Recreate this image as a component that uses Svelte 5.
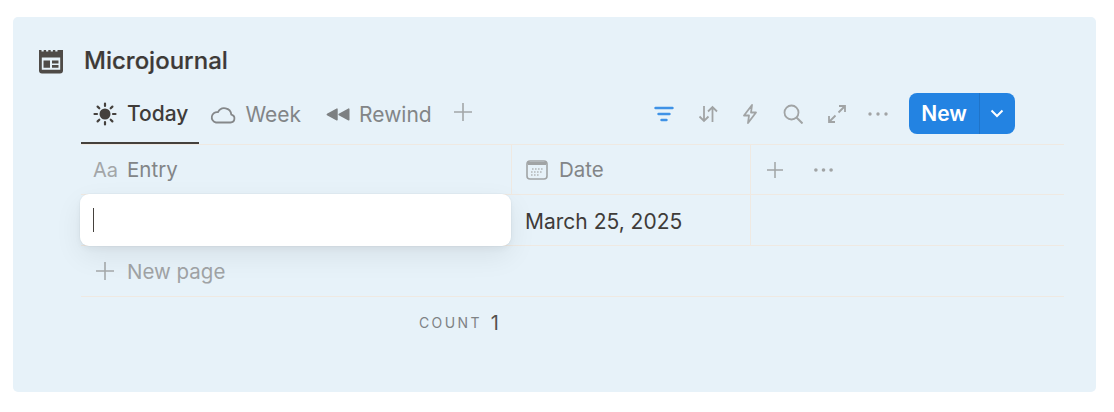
<script>
  const tabs = [
    { name: 'Today', icon: 'sun', active: true },
    { name: 'Week', icon: 'cloud' },
    { name: 'Rewind', icon: 'rewind' }
  ]
</script>

<div class="page">
  <div class="card">
    <div class="title">
      <svg class="title-icon" viewBox="0 0 26 25" width="26" height="25">
        <path fill="#4f4b47" fill-rule="evenodd" d="M1 1h2.500v1.500h2.200V1h2.400v1.500h2.200V1h2.400v1.500h2.200V1h2.400v1.500h2.200V1H25v20.500a3 3 0 0 1-3 3H4a3 3 0 0 1-3-3zM3.800 8.500v12.300h18.400V8.500zM5.500 11.500h6.500v7.300H5.500zM14 11.500h6.500v3H14zM14 16h6.500v2.800H14z"/>
      </svg>
      <h1>Microjournal</h1>
    </div>

    <div class="body">
      <div class="toolbar">
        <div class="tabs">
          {#each tabs as tab}
            <div class="tab {tab.icon}" class:active={tab.active}>
              {#if tab.icon === 'sun'}
                <svg viewBox="0 0 24 24" width="24" height="24">
                  <circle cx="12" cy="12" r="5.500" fill="#45413d"/>
                  <path stroke="#45413d" stroke-width="2.200" stroke-linecap="round" d="M12 1.500v2.500M12 20v2.500M1.500 12H4M20 12h2.500M4.600 4.600l1.700 1.700M17.700 17.700l1.700 1.700M4.600 19.400l1.700-1.700M17.700 6.300l1.700-1.700"/>
                </svg>
              {:else if tab.icon === 'cloud'}
                <svg viewBox="0 0 26 20" width="26" height="20">
                  <path fill="none" stroke="#85888a" stroke-width="1.800" stroke-linejoin="round" d="M6 17.500h14.500a4 4 0 0 0 .8-7.900 7 7 0 0 0-13.300-2.400A5.200 5.200 0 0 0 6 17.500z"/>
                </svg>
              {:else}
                <svg viewBox="0 0 23 14" width="25" height="15">
                  <path fill="#7d8082" stroke="#7d8082" stroke-width="1.400" stroke-linejoin="round" d="M11 2v10L2 7zM22 2v10l-9-5z"/>
                </svg>
              {/if}
              <span>{tab.name}</span>
            </div>
          {/each}
          <svg class="tab-plus" viewBox="0 0 18 18" width="18" height="18">
            <path stroke="#a3a6a8" stroke-width="1.600" d="M9 0v18M0 9h18"/>
          </svg>
        </div>

        <div class="actions">
          <svg viewBox="0 0 20 16" width="20" height="16">
            <path stroke="#3f92e6" stroke-width="2.400" stroke-linecap="round" d="M1.500 2h17M4.500 8h11M7.500 14h5"/>
          </svg>
          <svg viewBox="0 0 20 18" width="20" height="18">
            <path fill="none" stroke="#a1a4a5" stroke-width="1.800" d="M6 1v15M1.500 11.500 6 16l4.500-4.500M14.500 17V2M10 6.500 14.500 2 19 6.500"/>
          </svg>
          <svg class="bolt" viewBox="0 0 16 20" width="16" height="20">
            <path fill="none" stroke="#a1a4a5" stroke-width="1.800" stroke-linejoin="round" d="M10 1 2 11.500h5L6 19l8-10.500H9z"/>
          </svg>
          <svg class="search" viewBox="0 0 20 20" width="20" height="20">
            <circle cx="8.500" cy="8.500" r="7" fill="none" stroke="#a1a4a5" stroke-width="1.800"/>
            <path stroke="#a1a4a5" stroke-width="2" d="m13.500 13.500 6 6"/>
          </svg>
          <svg class="expand" viewBox="0 0 18 18" width="18" height="18">
            <path fill="none" stroke="#a1a4a5" stroke-width="1.800" d="M11 1h6v6M17 1 10.500 7.500M1 11v6h6M1 17l6.500-6.500"/>
          </svg>
          <svg viewBox="0 0 20 4" width="20" height="4">
            <circle cx="2" cy="2" r="1.700" fill="#a1a4a5"/>
            <circle cx="10" cy="2" r="1.700" fill="#a1a4a5"/>
            <circle cx="18" cy="2" r="1.700" fill="#a1a4a5"/>
          </svg>
          <div class="new-btn">
            <span class="new-label">New</span>
            <span class="new-arrow">
              <svg viewBox="0 0 14 9" width="14" height="9">
                <path fill="none" stroke="#fff" stroke-width="2" d="m1.500 1.500 5.500 5.500 5.500-5.500"/>
              </svg>
            </span>
          </div>
        </div>
      </div>

      <div class="table">
        <div class="row head">
          <div class="cell entry">
            <span class="aa">Aa</span>
            <span>Entry</span>
          </div>
          <div class="cell date">
            <svg viewBox="0 0 22 20" width="22" height="20">
              <rect x="1" y="1" width="20" height="18" rx="3" fill="none" stroke="#a1a4a5" stroke-width="1.600"/>
              <path fill="#a1a4a5" d="M2 2h18v3H2z"/>
              <path stroke="#b4b7b8" stroke-width="1.400" stroke-dasharray="1.600 1.400" d="M6 9h11M5 12h12M5 15h8"/>
            </svg>
            <span>Date</span>
          </div>
          <div class="cell extra">
            <svg viewBox="0 0 16 16" width="16" height="16">
              <path stroke="#a1a4a5" stroke-width="1.500" d="M8 0v16M0 8h16"/>
            </svg>
            <svg viewBox="0 0 20 4" width="19" height="4">
              <circle cx="2" cy="2" r="1.900" fill="#a1a4a5"/>
              <circle cx="10" cy="2" r="1.900" fill="#a1a4a5"/>
              <circle cx="18" cy="2" r="1.900" fill="#a1a4a5"/>
            </svg>
          </div>
        </div>

        <div class="row data">
          <div class="cell entry">
            <div class="editor"><i class="caret"></i></div>
          </div>
          <div class="cell date"><span class="date-value">March 25, 2025</span></div>
          <div class="cell extra"></div>
        </div>

        <div class="new-page">
          <svg viewBox="0 0 18 18" width="18" height="18">
            <path stroke="#a6a9ab" stroke-width="1.600" d="M9 0v18M0 9h18"/>
          </svg>
          <span>New page</span>
        </div>

        <div class="count">
          <span class="count-label">COUNT</span>
          <span class="count-value">1</span>
        </div>
      </div>
    </div>
  </div>
</div>

<style>
  :global(body) {
    background: #fff;
  }
  .page {
    width: 1114px;
    height: 412px;
    padding: 17px 18px 20px 13px;
    box-sizing: border-box;
    font-family: Inter, "Liberation Sans", sans-serif;
  }
  .card {
    height: 375px;
    background: #e7f2f9;
    border-radius: 5px;
    padding-top: 28px;
    box-sizing: border-box;
    overflow: hidden;
  }
  .title {
    display: flex;
    align-items: center;
    gap: 20px;
    height: 32px;
    padding-left: 25px;
  }
  h1 {
    margin: -2px 0 0;
    font-size: 24px;
    font-weight: 500;
    color: #3d3a37;
    letter-spacing: 0;
    -webkit-text-stroke: 0.2px #3d3a37;
  }
  .body {
    margin: 0 32px 0 68px;
  }
  .toolbar {
    display: flex;
    justify-content: space-between;
    margin-top: 16px;
    border-bottom: 1px solid #efe9e2;
    height: 51px;
  }
  .tabs {
    display: flex;
    align-items: flex-start;
  }
  .tab {
    display: flex;
    align-items: center;
    gap: 9px;
    height: 49px;
    padding: 0 12px;
    font-size: 21px;
    color: #828587;
    padding-bottom: 6px;
    box-sizing: border-box;
  }
  .tab.active {
    color: #3f3c39;
    border-bottom: 2px solid #45413d;
    height: 51px;
    padding: 0 11px 8px 12px;
    gap: 10px;
    font-weight: 500;
  }
  .tab.cloud {
    padding-left: 11px;
  }
  .tab-plus {
    margin: 10px 0 0 10px;
  }
  .actions {
    display: flex;
    align-items: center;
    gap: 24px;
    height: 41px;
    margin-right: 49px;
  }
  .bolt,
  .search {
    margin-right: 1px;
  }
  .expand {
    margin-right: -2px;
  }
  .new-btn {
    display: flex;
    height: 41px;
    margin-left: -3px;
    background: #2383e2;
    border-radius: 8px;
    color: #fff;
    font-size: 21px;
    font-weight: 600;
  }
  .new-label {
    display: flex;
    align-items: center;
    padding: 0 12px;
    border-right: 1px solid #1f74c9;
  }
  .new-arrow {
    display: flex;
    align-items: center;
    padding: 0 11px 0 10px;
  }
  .row {
    display: grid;
    grid-template-columns: 431px 239px 1fr;
    border-bottom: 1px solid #efe9e2;
    box-sizing: border-box;
  }
  .head {
    height: 50px;
    color: #828587;
    font-size: 20.500px;
  }
  .data {
    height: 51px;
    color: #3f3c39;
    font-size: 21px;
  }
  .cell {
    display: flex;
    align-items: center;
    box-sizing: border-box;
    border-right: 1px solid #efe9e2;
  }
  .cell.extra {
    border-right: none;
    gap: 31px;
    padding-left: 16px;
  }
  .cell.date {
    padding-left: 14px;
    gap: 11px;
  }
  .date-value {
    margin: 2px 0 0 -1px;
  }
  .head .entry {
    padding-left: 12px;
    gap: 9px;
  }
  .aa {
    color: #a3a6a8;
    font-size: 20px;
  }
  .data .entry {
    position: relative;
    border-right: none;
  }
  .editor {
    position: absolute;
    top: -1px;
    left: -1px;
    width: 431px;
    height: 52px;
    display: flex;
    align-items: center;
    padding-left: 13px;
    box-sizing: border-box;
    background: #fff;
    border-radius: 9px;
    box-shadow: 0 0 0 1px rgba(15, 15, 15, 0.02), 0 3px 6px rgba(15, 15, 15, 0.04), 0 10px 28px rgba(15, 15, 15, 0.07);
  }
  .caret {
    display: block;
    width: 1px;
    height: 24px;
    background: #45413d;
  }
  .new-page {
    display: flex;
    align-items: center;
    gap: 13px;
    height: 51px;
    padding-left: 15px;
    box-sizing: border-box;
    border-bottom: 1px solid #efe9e2;
    color: #a0a3a5;
    font-size: 20.500px;
  }
  .new-page span {
    margin-top: 1px;
  }
  .count {
    display: flex;
    align-items: center;
    justify-content: flex-end;
    width: 418px;
    height: 51px;
    gap: 9px;
  }
  .count-label {
    font-size: 14px;
    letter-spacing: 2.400px;
    color: #7f8285;
  }
  .count-value {
    font-size: 20px;
    color: #55524f;
  }
</style>
